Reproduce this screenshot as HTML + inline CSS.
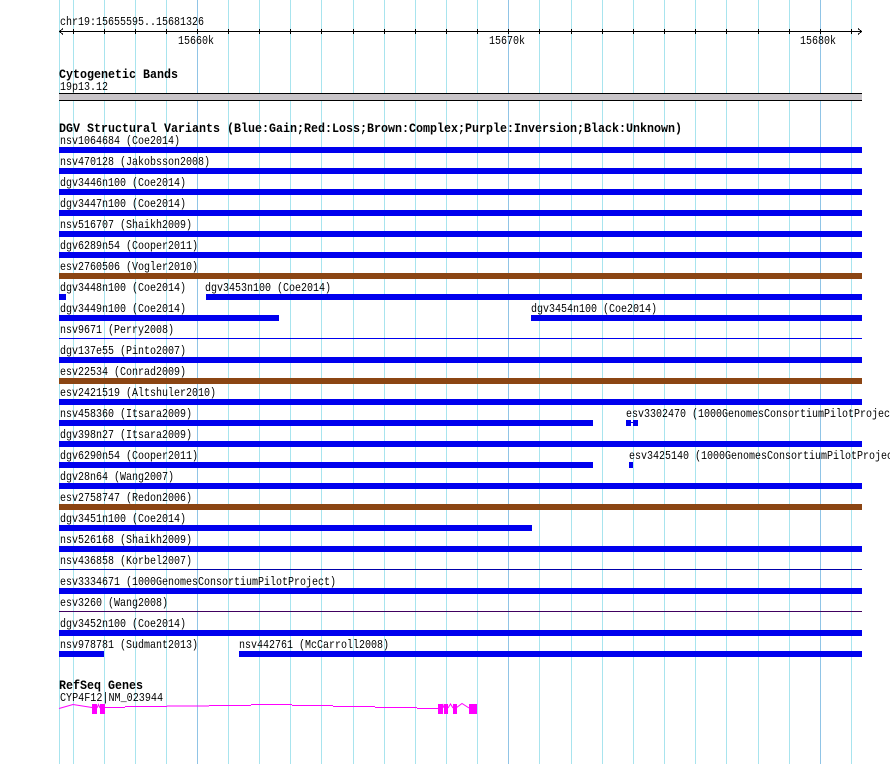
<!DOCTYPE html>
<html><head><meta charset="utf-8"><style>
html,body{margin:0;padding:0;background:#fff}
svg{display:block}
text{font-family:"Liberation Mono",monospace;font-size:12px;fill:#000}
.b{font-weight:bold;font-size:13px}
</style></head><body>
<svg width="890" height="764" xmlns="http://www.w3.org/2000/svg" shape-rendering="crispEdges">
<g stroke="#a8e4ee" stroke-width="1">
<line x1="59.5" y1="0" x2="59.5" y2="764"/>
<line x1="73.5" y1="0" x2="73.5" y2="764"/><line x1="104.5" y1="0" x2="104.5" y2="764"/><line x1="135.5" y1="0" x2="135.5" y2="764"/><line x1="166.5" y1="0" x2="166.5" y2="764"/>
<line x1="228.5" y1="0" x2="228.5" y2="764"/><line x1="259.5" y1="0" x2="259.5" y2="764"/><line x1="290.5" y1="0" x2="290.5" y2="764"/><line x1="321.5" y1="0" x2="321.5" y2="764"/><line x1="353.5" y1="0" x2="353.5" y2="764"/><line x1="384.5" y1="0" x2="384.5" y2="764"/><line x1="415.5" y1="0" x2="415.5" y2="764"/><line x1="446.5" y1="0" x2="446.5" y2="764"/><line x1="477.5" y1="0" x2="477.5" y2="764"/>
<line x1="539.5" y1="0" x2="539.5" y2="764"/><line x1="571.5" y1="0" x2="571.5" y2="764"/><line x1="602.5" y1="0" x2="602.5" y2="764"/><line x1="633.5" y1="0" x2="633.5" y2="764"/><line x1="664.5" y1="0" x2="664.5" y2="764"/><line x1="695.5" y1="0" x2="695.5" y2="764"/><line x1="726.5" y1="0" x2="726.5" y2="764"/><line x1="758.5" y1="0" x2="758.5" y2="764"/><line x1="789.5" y1="0" x2="789.5" y2="764"/>
<line x1="851.5" y1="0" x2="851.5" y2="764"/>
</g>
<g stroke="#90c4e6" stroke-width="1">
<line x1="197.5" y1="0" x2="197.5" y2="764"/><line x1="508.5" y1="0" x2="508.5" y2="764"/><line x1="820.5" y1="0" x2="820.5" y2="764"/>
</g>
<text x="60" y="25" textLength="144" lengthAdjust="spacingAndGlyphs">chr19:15655595..15681326</text>
<g stroke="#000" stroke-width="1">
<line x1="59" y1="31.5" x2="862" y2="31.5"/>
<path d="M63 28.5 L59.5 31.5 L63 34.5 M858 28.5 L861.5 31.5 L858 34.5" fill="none"/>
<path d="M73.5 29v5M104.5 29v5M135.5 29v5M166.5 29v5M197.5 29v5M228.5 29v5M259.5 29v5M290.5 29v5M321.5 29v5M353.5 29v5M384.5 29v5M415.5 29v5M446.5 29v5M477.5 29v5M508.5 29v5M539.5 29v5M571.5 29v5M602.5 29v5M633.5 29v5M664.5 29v5M695.5 29v5M726.5 29v5M758.5 29v5M789.5 29v5M820.5 29v5M851.5 29v5"/>
</g>
<text x="178" y="44" textLength="36" lengthAdjust="spacingAndGlyphs">15660k</text>
<text x="489" y="44" textLength="36" lengthAdjust="spacingAndGlyphs">15670k</text>
<text x="800" y="44" textLength="36" lengthAdjust="spacingAndGlyphs">15680k</text>
<text class="b" x="59" y="78" textLength="119" lengthAdjust="spacingAndGlyphs">Cytogenetic Bands</text>
<text x="60" y="90" textLength="48" lengthAdjust="spacingAndGlyphs">19p13.12</text>
<rect x="59" y="93" width="803" height="8" fill="#c8c4c8"/>
<rect x="59" y="93" width="803" height="1" fill="#000"/>
<rect x="59" y="100" width="803" height="1" fill="#000"/>
<text class="b" x="59" y="132" textLength="623" lengthAdjust="spacingAndGlyphs">DGV Structural Variants (Blue:Gain;Red:Loss;Brown:Complex;Purple:Inversion;Black:Unknown)</text>
<g fill="#0000ee">
<rect x="59" y="147" width="803" height="6"/>
<rect x="59" y="168" width="803" height="6"/>
<rect x="59" y="189" width="803" height="6"/>
<rect x="59" y="210" width="803" height="6"/>
<rect x="59" y="231" width="803" height="6"/>
<rect x="59" y="252" width="803" height="6"/>
<rect x="59" y="294" width="7" height="6"/><rect x="206" y="294" width="656" height="6"/>
<rect x="59" y="315" width="220" height="6"/><rect x="531" y="315" width="331" height="6"/>
<rect x="59" y="338" width="803" height="1"/>
<rect x="59" y="357" width="803" height="6"/>
<rect x="59" y="399" width="803" height="6"/>
<rect x="59" y="420" width="534" height="6"/>
<rect x="626" y="420" width="5" height="6"/><rect x="633" y="420" width="5" height="6"/><rect x="631" y="422" width="2" height="1"/>
<rect x="59" y="441" width="803" height="6"/>
<rect x="59" y="462" width="534" height="6"/><rect x="629" y="462" width="4" height="6"/>
<rect x="59" y="483" width="803" height="6"/>
<rect x="59" y="525" width="473" height="6"/>
<rect x="59" y="546" width="803" height="6"/>
<rect x="59" y="588" width="803" height="6"/>
<rect x="59" y="630" width="803" height="6"/>
<rect x="59" y="651" width="45" height="6"/><rect x="239" y="651" width="623" height="6"/>
</g>
<rect x="59" y="569" width="803" height="1" fill="#0000aa"/>
<rect x="59" y="611" width="803" height="1" fill="#400060"/>
<g fill="#8b4513">
<rect x="59" y="273" width="803" height="6"/>
<rect x="59" y="378" width="803" height="6"/>
<rect x="59" y="504" width="803" height="6"/>
</g>
<g>
<text x="60" y="144" textLength="120" lengthAdjust="spacingAndGlyphs">nsv1064684 (Coe2014)</text>
<text x="60" y="165" textLength="150" lengthAdjust="spacingAndGlyphs">nsv470128 (Jakobsson2008)</text>
<text x="60" y="186" textLength="126" lengthAdjust="spacingAndGlyphs">dgv3446n100 (Coe2014)</text>
<text x="60" y="207" textLength="126" lengthAdjust="spacingAndGlyphs">dgv3447n100 (Coe2014)</text>
<text x="60" y="228" textLength="132" lengthAdjust="spacingAndGlyphs">nsv516707 (Shaikh2009)</text>
<text x="60" y="249" textLength="138" lengthAdjust="spacingAndGlyphs">dgv6289n54 (Cooper2011)</text>
<text x="60" y="270" textLength="138" lengthAdjust="spacingAndGlyphs">esv2760506 (Vogler2010)</text>
<text x="60" y="291" textLength="126" lengthAdjust="spacingAndGlyphs">dgv3448n100 (Coe2014)</text>
<text x="205" y="291" textLength="126" lengthAdjust="spacingAndGlyphs">dgv3453n100 (Coe2014)</text>
<text x="60" y="312" textLength="126" lengthAdjust="spacingAndGlyphs">dgv3449n100 (Coe2014)</text>
<text x="531" y="312" textLength="126" lengthAdjust="spacingAndGlyphs">dgv3454n100 (Coe2014)</text>
<text x="60" y="333" textLength="114" lengthAdjust="spacingAndGlyphs">nsv9671 (Perry2008)</text>
<text x="60" y="354" textLength="126" lengthAdjust="spacingAndGlyphs">dgv137e55 (Pinto2007)</text>
<text x="60" y="375" textLength="126" lengthAdjust="spacingAndGlyphs">esv22534 (Conrad2009)</text>
<text x="60" y="396" textLength="156" lengthAdjust="spacingAndGlyphs">esv2421519 (Altshuler2010)</text>
<text x="60" y="417" textLength="132" lengthAdjust="spacingAndGlyphs">nsv458360 (Itsara2009)</text>
<text x="626" y="417" textLength="276" lengthAdjust="spacingAndGlyphs">esv3302470 (1000GenomesConsortiumPilotProject)</text>
<text x="60" y="438" textLength="132" lengthAdjust="spacingAndGlyphs">dgv398n27 (Itsara2009)</text>
<text x="60" y="459" textLength="138" lengthAdjust="spacingAndGlyphs">dgv6290n54 (Cooper2011)</text>
<text x="629" y="459" textLength="276" lengthAdjust="spacingAndGlyphs">esv3425140 (1000GenomesConsortiumPilotProject)</text>
<text x="60" y="480" textLength="114" lengthAdjust="spacingAndGlyphs">dgv28n64 (Wang2007)</text>
<text x="60" y="501" textLength="132" lengthAdjust="spacingAndGlyphs">esv2758747 (Redon2006)</text>
<text x="60" y="522" textLength="126" lengthAdjust="spacingAndGlyphs">dgv3451n100 (Coe2014)</text>
<text x="60" y="543" textLength="132" lengthAdjust="spacingAndGlyphs">nsv526168 (Shaikh2009)</text>
<text x="60" y="564" textLength="132" lengthAdjust="spacingAndGlyphs">nsv436858 (Korbel2007)</text>
<text x="60" y="585" textLength="276" lengthAdjust="spacingAndGlyphs">esv3334671 (1000GenomesConsortiumPilotProject)</text>
<text x="60" y="606" textLength="108" lengthAdjust="spacingAndGlyphs">esv3260 (Wang2008)</text>
<text x="60" y="627" textLength="126" lengthAdjust="spacingAndGlyphs">dgv3452n100 (Coe2014)</text>
<text x="60" y="648" textLength="138" lengthAdjust="spacingAndGlyphs">nsv978781 (Sudmant2013)</text>
<text x="239" y="648" textLength="150" lengthAdjust="spacingAndGlyphs">nsv442761 (McCarroll2008)</text>
</g>
<text class="b" x="59" y="689" textLength="84" lengthAdjust="spacingAndGlyphs">RefSeq Genes</text>
<text x="60" y="701" textLength="103" lengthAdjust="spacingAndGlyphs">CYP4F12|NM_023944</text>
<g fill="none" stroke="#ff00ff" stroke-width="1" shape-rendering="auto">
<path d="M59 708.5 L73 704.5 L92 707.5"/>
<path d="M97 708 L98.5 704.5 L100 708"/>
<path d="M105 707.5 H125 M125 706.5 H167 M167 706 H209 M209 705.5 H251 M251 704.5 H292 M292 705.5 H333 M333 706.5 H375 M375 707.5 H417 M417 708.5 H438"/>
<path d="M442 708 L443 705 L444 708"/>
<path d="M448 708 L450.5 704 L453 708"/>
<path d="M456 708 L462 703.5 L469 708"/>
</g>
<g fill="#ff00ff">
<rect x="92" y="704" width="5" height="10"/>
<rect x="100" y="704" width="5" height="10"/>
<rect x="438" y="704" width="5" height="10"/>
<rect x="444" y="704" width="4" height="10"/>
<rect x="453" y="704" width="4" height="10"/>
<rect x="469" y="704" width="8" height="10"/>
</g>
</svg>
</body></html>
